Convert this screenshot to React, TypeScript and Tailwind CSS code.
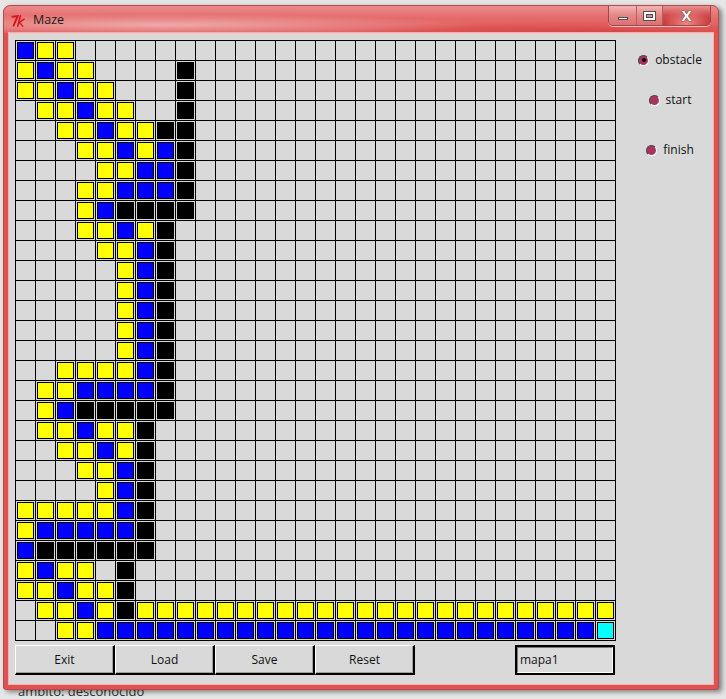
import React from "react";

const MAP = [
  "BYY...........................",
  "YBYY....K.....................",
  "YYBYY...K.....................",
  ".YYBYY..K.....................",
  "..YYBYYKK.....................",
  "...YYBYBK.....................",
  "....YYBBK.....................",
  "...YYBBBK.....................",
  "...YBKKKK.....................",
  "...YYBYK......................",
  "....YYBK......................",
  ".....YBK......................",
  ".....YBK......................",
  ".....YBK......................",
  ".....YBK......................",
  ".....YBK......................",
  "..YYYYBK......................",
  ".YYBBBBK......................",
  ".YBKKKKK......................",
  ".YYBYYK.......................",
  "..YYBYK.......................",
  "...YYBK.......................",
  "....YBK.......................",
  "YYYYYBK.......................",
  "YBBBBBK.......................",
  "BKKKKKK.......................",
  "YBYY.K........................",
  "YYBYYK........................",
  ".YYBYKYYYYYYYYYYYYYYYYYYYYYYYY",
  "..YYBBBBBBBBBBBBBBBBBBBBBBBBBC",
];

const FILL: Record<string, string> = {
  Y: "bg-[#ffff00]",
  B: "bg-[#0000ff]",
  K: "bg-black",
  C: "bg-[#00ffff]",
};

const font = "font-['Open_Sans',_'Liberation_Sans',_sans-serif]";

function Cell({ kind }: { kind: string }) {
  return (
    <div className="h-[19px] bg-[#d9d9d9] p-px">
      {kind !== "." && <div className={`h-full border border-black ${FILL[kind]}`} />}
    </div>
  );
}

function Radio({ label, selected }: { label: string; selected?: boolean }) {
  return (
    <div className="flex h-[20px] items-center gap-[6px]">
      <span className="flex h-[11px] w-[11px] items-center justify-center rounded-full border border-b-white border-l-[#4a4a4a] border-r-white border-t-[#4a4a4a] bg-[#a8345f]">
        {selected && <span className="h-[4px] w-[4px] rounded-full bg-black" />}
      </span>
      <span className="text-[12px] text-[#111]">{label}</span>
    </div>
  );
}

function TkButton({ label }: { label: string }) {
  return (
    <button className="flex h-[30px] w-[100px] items-center justify-center border-b-2 border-l border-r-2 border-t border-b-black border-l-white border-r-black border-t-white bg-[#d9d9d9] text-[12px] text-[#111] shadow-[inset_-1px_-1px_0_#a0a0a0]">
      {label}
    </button>
  );
}

function TkLogo() {
  return (
    <svg width="15" height="14" viewBox="0 0 16 14" fill="none" stroke="#d8141a" strokeLinecap="round">
      <path d="M1.5 2.5 L7 1.8 L2.8 12" strokeWidth="2" />
      <path d="M10 1.5 L7.2 12.5" strokeWidth="1.7" />
      <path d="M14 5 L9 8.5 L12.5 12.5" strokeWidth="1.5" />
    </svg>
  );
}

function CaptionButtons() {
  return (
    <div className="flex h-[20px] overflow-hidden rounded-b-[5px] border border-t-0 border-[#9a4a4a] shadow-[0_1px_0_rgba(255,255,255,0.6)]">
      <div className="flex w-[28px] items-center justify-center border-r border-[#b06060] bg-[linear-gradient(180deg,#f2b4b4,#e68686_50%,#dd7070)]">
        <span className="mt-[5px] h-[3px] w-[10px] border border-[#505050] bg-white" />
      </div>
      <div className="flex w-[26px] items-center justify-center border-r border-[#b06060] bg-[linear-gradient(180deg,#f2b4b4,#e68686_50%,#dd7070)]">
        <span className="h-[8px] w-[11px] border-2 border-white shadow-[0_0_0_1px_#505050,inset_0_0_0_1px_#505050]" />
      </div>
      <div className="flex w-[47px] items-center justify-center bg-[radial-gradient(ellipse_at_50%_100%,#f08888,transparent_70%),linear-gradient(180deg,#e69090,#d04848_50%,#c43838)]">
        <span className="text-[15px] font-bold leading-none text-white [text-shadow:0_0_1px_#333,0_0_1px_#333]">X</span>
      </div>
    </div>
  );
}

export default function App() {
  return (
    <div className={`flex h-[699px] w-[726px] flex-col overflow-hidden bg-[#e6e6e6] pl-[3px] pt-[5px] ${font}`}>
      <div className="relative z-10 flex h-[685px] w-[716px] flex-col rounded-t-[7px] rounded-b-[3px] border border-[#b84a4a] bg-[#e05252] shadow-[3px_2px_5px_rgba(0,0,0,0.45)]">
        {/* title bar */}
        <div className="flex h-[27px] items-start rounded-t-[6px] bg-[radial-gradient(ellipse_at_22%_70%,rgba(255,255,255,0.45),transparent_40%),radial-gradient(ellipse_at_80%_100%,rgba(200,30,30,0.4),transparent_30%),linear-gradient(180deg,#ec8c8c,#e46a6a_45%,#e05a5a)]">
          <div className="flex h-full items-center gap-[7px] pl-[7px] pt-[2px]">
            <TkLogo />
            <span className="text-[12.5px] text-[#1a1a1a]">Maze</span>
          </div>
          <div className="ml-auto mr-[7px]">
            <CaptionButtons />
          </div>
        </div>

        {/* client area */}
        <div className="mx-[5px] flex h-[651px] w-[704px] flex-col border-t border-[#f0c8c8] bg-[#d9d9d9] shadow-[0_0_0_1px_#f3b0b0]">
          <div className="flex">
            <div className="ml-[6px] mt-[6px] grid w-fit grid-cols-[repeat(30,19px)] gap-px bg-black p-px">
              {MAP.flatMap((row, r) => row.split("").map((k, c) => <Cell key={`${r}-${c}`} kind={k} />))}
            </div>
            <div className="ml-[12px] mt-[16px] flex w-[84px] flex-col items-center">
              <Radio label="obstacle" selected />
              <div className="h-[20px]" />
              <Radio label="start" />
              <div className="h-[30px]" />
              <Radio label="finish" />
            </div>
          </div>
          <div className="ml-[6px] mt-[4px] flex">
            <TkButton label="Exit" />
            <TkButton label="Load" />
            <TkButton label="Save" />
            <TkButton label="Reset" />
            <div className="ml-[100px] h-[30px] w-[100px] border-2 border-black">
              <div className="flex h-full items-center border border-b-white border-l-[#7a7a7a] border-r-white border-t-[#7a7a7a] bg-[#dcdcdc] px-[2px] text-[12px] text-[#111]">
                mapa1
              </div>
            </div>
          </div>
        </div>
      </div>
      <div className="-mt-[6px] pl-[15px] text-[13px] leading-[14px] text-[#333]">ámbito: desconocido</div>
    </div>
  );
}
